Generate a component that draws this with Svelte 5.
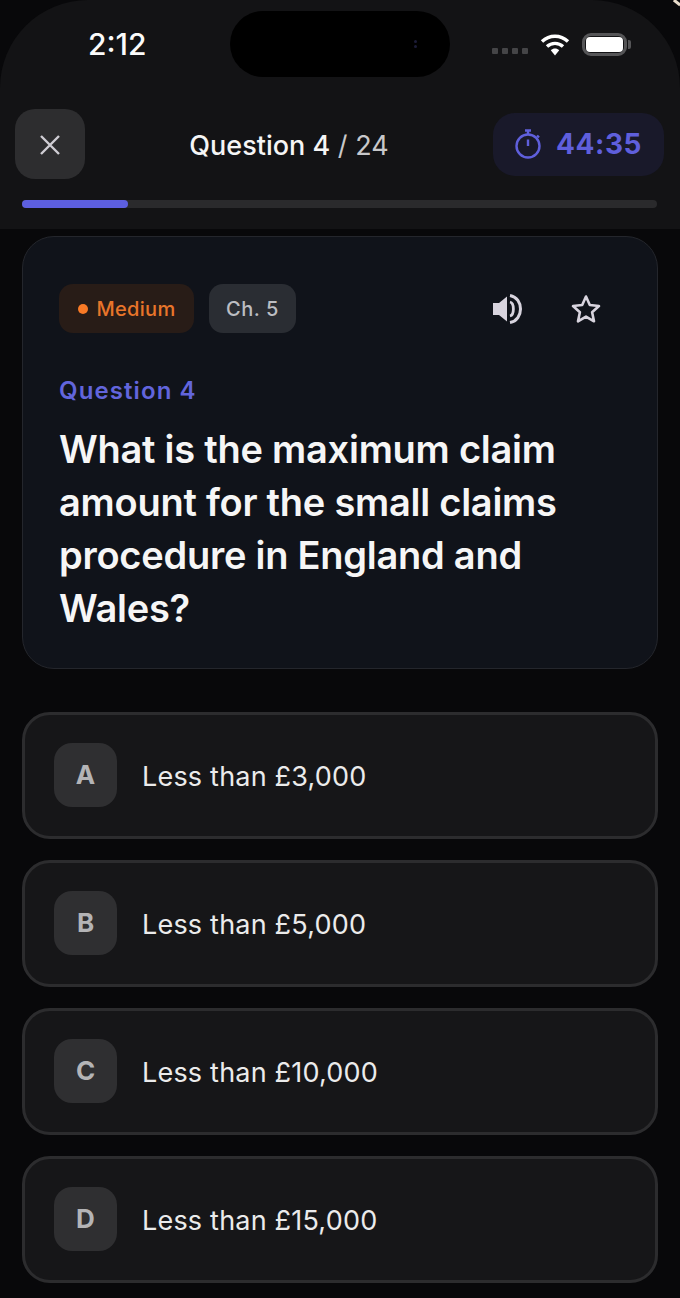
<script>
  const options = [
    { key: 'A', text: 'Less than £3,000' },
    { key: 'B', text: 'Less than £5,000' },
    { key: 'C', text: 'Less than £10,000' },
    { key: 'D', text: 'Less than £15,000' }
  ];
  const progress = 16.7;
</script>

<div class="page">
  <header>
    <div class="status">
      <span class="time">2:12</span>
      <div class="island"><i></i><i></i></div>
      <div class="status-icons">
        <div class="signal"><i></i><i></i><i></i><i></i></div>
        <svg class="wifi" width="30" height="23" viewBox="0 0 30 23">
          <path d="M2 8.500C9.500 1.500 20.500 1.500 28 8.500" fill="none" stroke="#fff" stroke-width="3.400" />
          <path d="M7 13.500C11.500 9.300 18.500 9.300 23 13.500" fill="none" stroke="#fff" stroke-width="3.400" />
          <path d="M10.800 17.200C13.300 14.900 16.700 14.900 19.200 17.200L15 22.500Z" fill="#fff" />
        </svg>
        <div class="battery"><div class="cell"></div></div>
      </div>
    </div>
    <div class="nav">
      <button class="close" aria-label="Close">
        <svg width="24" height="24" viewBox="0 0 24 24" fill="none" stroke="#cfcdd4" stroke-width="2.400">
          <path d="M3 3L21 21M21 3L3 21" />
        </svg>
      </button>
      <div class="title"><b>Question 4</b> / 24</div>
      <div class="timer">
        <svg width="26" height="30" viewBox="0 0 26 30" fill="none" stroke="#5f5fdc" stroke-width="2.400">
          <path d="M10 1.500H16M13 2V5M22 6.500L24 8.500" />
          <circle cx="13" cy="17" r="11.500" />
          <path d="M13 10.500V17" />
        </svg>
        <span>44:35</span>
      </div>
    </div>
    <div class="track"><div class="fill" style="width: {progress}%"></div></div>
  </header>

  <main>
    <section class="card">
      <div class="tags">
        <span class="tag medium"><i></i>Medium</span>
        <span class="tag chapter">Ch. 5</span>
        <div class="actions">
          <svg width="32" height="34" viewBox="0 0 32 34">
            <path d="M1 11H7L15 4.500V29.500L7 23H1Z" fill="#d8d4de" />
            <path d="M18 10C22.500 11 22.500 23 18 24" fill="none" stroke="#d8d4de" stroke-width="2.800" />
            <path d="M18 3.500C32 6 32 28 18 30.500" fill="none" stroke="#d8d4de" stroke-width="3" />
          </svg>
          <svg width="32" height="30" viewBox="0 0 32 30" fill="none" stroke="#d8d4de" stroke-width="2.600" stroke-linejoin="round">
            <path d="M16 2.500L19.800 11L29 12L22.100 18.200L24 27.300L16 22.600L8 27.300L9.900 18.200L3 12L12.200 11Z" />
          </svg>
        </div>
      </div>
      <div class="eyebrow">Question 4</div>
      <h1>What is the maximum claim amount for the small claims procedure in England and Wales?</h1>
    </section>

    <div class="options">
      {#each options as opt}
        <button class="option">
          <span class="key">{opt.key}</span>
          <span class="label">{opt.text}</span>
        </button>
      {/each}
    </div>
  </main>
</div>

<style>
  :global(body) {
    background: #000;
  }

  .page {
    position: relative;
    width: 680px;
    height: 1298px;
    overflow: hidden;
    background: #08080a;
    font-family: Inter, "Liberation Sans", sans-serif;
    color: #fff;
  }

  /* bit of the bezel that shows in the top right corner */
  .page::after {
    content: "";
    position: absolute;
    top: 1px;
    right: -1px;
    width: 8px;
    height: 3px;
    background: #e8dccb;
    transform: rotate(38deg);
  }

  header {
    height: 229px;
    box-sizing: border-box;
    padding: 11px 16px 0 15px;
    background: #131315;
    border-radius: 88px 88px 0 0;
  }

  .status {
    height: 66px;
    display: flex;
    align-items: center;
    margin-bottom: 32px;
  }

  .time {
    width: 215px;
    padding-left: 73px;
    box-sizing: border-box;
    font-size: 30px;
    font-weight: 500;
    color: #fbfbfb;
  }

  .island {
    width: 220px;
    height: 66px;
    border-radius: 33px;
    background: #000;
    display: flex;
    flex-direction: column;
    align-items: flex-end;
    justify-content: center;
    gap: 2px;
    padding-right: 33px;
    box-sizing: border-box;
  }

  .island i {
    width: 3px;
    height: 3px;
    border-radius: 50%;
    background: #1c1c38;
  }

  .status-icons {
    display: flex;
    align-items: center;
    margin-left: 42px;
  }

  .signal {
    display: flex;
    gap: 4px;
    margin-top: 14px;
    margin-right: 12px;
  }

  .signal i {
    width: 6px;
    height: 6px;
    border-radius: 1px;
    background: #454547;
  }

  .wifi {
    margin-right: 12px;
  }

  .battery {
    position: relative;
    width: 45px;
    height: 23px;
    box-sizing: border-box;
    border: 3px solid #555557;
    border-radius: 9px;
    padding: 1px;
  }

  .battery::after {
    content: "";
    position: absolute;
    right: -7px;
    top: 4px;
    width: 3px;
    height: 9px;
    border-radius: 0 2px 2px 0;
    background: #555557;
  }

  .cell {
    height: 100%;
    background: #fff;
    border-radius: 4px;
  }

  .nav {
    display: flex;
    align-items: center;
    justify-content: space-between;
    height: 70px;
  }

  .close {
    width: 70px;
    height: 70px;
    padding: 2px 0 0;
    border: 0;
    border-radius: 20px;
    background: #2d2d2f;
    display: flex;
    align-items: center;
    justify-content: center;
  }

  .title {
    padding-top: 2px;
    font-size: 27px;
    font-weight: 400;
    color: #c8c8ca;
  }

  .title b {
    font-weight: 500;
    color: #f5f5f5;
  }

  .timer {
    width: 171px;
    height: 63px;
    box-sizing: border-box;
    border-radius: 22px;
    background: #19192a;
    display: flex;
    align-items: center;
    justify-content: center;
    gap: 15px;
    color: #5f5fdc;
    font-size: 28px;
    font-weight: 700;
    letter-spacing: 0.6px;
  }

  .track {
    height: 8px;
    margin: 21px 7px 0;
    border-radius: 4px;
    background: #2a2a2c;
  }

  .fill {
    height: 100%;
    border-radius: 4px;
    background: #5d5fe0;
  }

  main {
    padding: 7px 22px 0;
  }

  .card {
    height: 433px;
    box-sizing: border-box;
    padding: 47px 36px 0;
    border: 1px solid #24262c;
    border-radius: 32px;
    background: #10131a;
  }

  .tags {
    display: flex;
    align-items: center;
    gap: 15px;
    height: 49px;
  }

  .tag {
    height: 49px;
    box-sizing: border-box;
    display: flex;
    align-items: center;
    justify-content: center;
    border-radius: 14px;
    font-size: 20px;
  }

  .medium {
    width: 135px;
    gap: 9px;
    background: #281c17;
    color: #e8752a;
    font-weight: 500;
    letter-spacing: 0.3px;
  }

  .medium i {
    width: 10px;
    height: 10px;
    border-radius: 50%;
    background: #f97a26;
  }

  .chapter {
    width: 87px;
    background: #2a2d33;
    color: #bcbdc2;
    font-weight: 500;
    letter-spacing: 0.5px;
  }

  .actions {
    display: flex;
    align-items: center;
    gap: 46px;
    margin-left: auto;
    margin-right: 19px;
  }

  .eyebrow {
    margin-top: 43px;
    font-size: 24px;
    line-height: 30px;
    font-weight: 600;
    letter-spacing: 1.1px;
    color: #6265dc;
  }

  h1 {
    margin: 17px 0 0;
    font-size: 38px;
    line-height: 53px;
    font-weight: 600;
    letter-spacing: -0.25px;
    color: #f6f6f6;
  }

  .options {
    display: flex;
    flex-direction: column;
    gap: 21px;
    margin-top: 43px;
  }

  .option {
    height: 127px;
    box-sizing: border-box;
    display: flex;
    align-items: center;
    gap: 25px;
    padding: 0 0 0 29px;
    border: 3px solid #2c2c2e;
    border-radius: 28px;
    background: #161618;
    font-family: inherit;
    text-align: left;
  }

  .key {
    width: 63px;
    height: 64px;
    margin-bottom: 2px;
    display: flex;
    align-items: center;
    justify-content: center;
    border-radius: 18px;
    background: #2f2f31;
    color: #b4b4b6;
    font-size: 26px;
    font-weight: 700;
  }

  .label {
    margin-top: 2px;
    font-size: 27px;
    letter-spacing: 0.2px;
    color: #ebebeb;
  }
</style>
